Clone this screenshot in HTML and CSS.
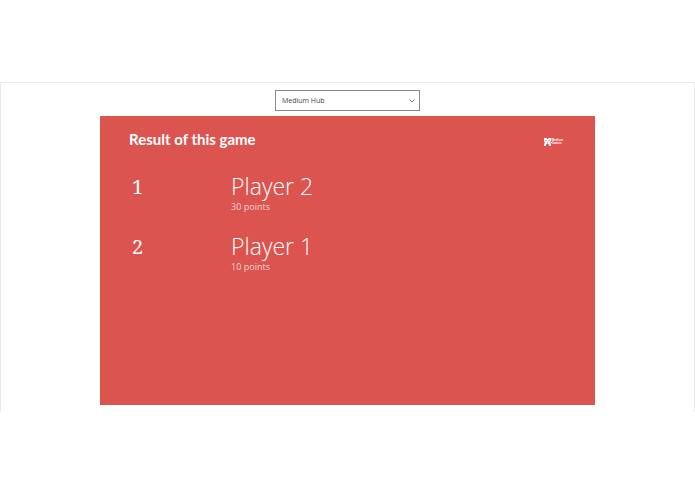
FILE: index.html
```
<!DOCTYPE html>
<html lang="en">
<head>
<meta charset="utf-8">
<title>Result of this game</title>
<link rel="stylesheet" href="styles.css">
</head>
<body>
<main class="simulator">
  <div class="device">
    <select class="device-select" aria-label="Device">
      <option>Medium Hub</option>
    </select>
    <svg class="chevron" viewBox="0 0 6 4" aria-hidden="true"><path d="M.5.5 3 3 5.5.5"/></svg>
  </div>
  <section class="screen">
    <header class="screen-header">
      <h1>Result of this game</h1>
      <div class="logo">
        <svg class="logo-mark" viewBox="0 0 8 8" aria-hidden="true">
          <path d="M0 0h2.500l.5 1h1l.5-1H7v3L6 4.500 7 6v2H5.500L4.500 6h-2L1.500 8H0V6l1-1.500L0 3z"/>
          <path class="logo-cut" d="M1.500 2.500h1M4.500 2.500h1M3 5h1"/>
          <path d="M7 4h1v1H7z"/>
        </svg>
        <div class="logo-text"><span>Medium</span><span>Games</span></div>
      </div>
    </header>
    <ol class="ranking">
      <li>
        <span class="rank">1</span>
        <div><h2>Player 2</h2><p>30 points</p></div>
      </li>
      <li>
        <span class="rank">2</span>
        <div><h2>Player 1</h2><p>10 points</p></div>
      </li>
    </ol>
  </section>
</main>
</body>
</html>
```
FILE: styles.css
```
* {
  box-sizing: border-box;
}

body {
  margin: 0;
  padding: 82px 0;
  background: #fff;
  font-family: "Open Sans", "Noto Sans", sans-serif;
}

.simulator {
  display: flex;
  flex-direction: column;
  align-items: center;
  gap: 5px;
  padding: 7px 0;
  border: 1px solid #ebebeb;
  border-bottom: 0;
}

.device {
  position: relative;
  width: 145px;
  height: 21px;
}

.device-select {
  appearance: none;
  display: block;
  width: 100%;
  height: 100%;
  padding: 0 20px 0 6px;
  border: 1px solid #858a8a;
  border-radius: 0;
  background: #fff;
  color: #424747;
  font: 500 7px "Open Sans", sans-serif;
}

.chevron {
  position: absolute;
  top: 9px;
  right: 5px;
  width: 6px;
  height: 4px;
  fill: none;
  stroke: #777;
}

.screen {
  width: 71.4%;
  aspect-ratio: 495 / 289;
  padding: 12px 32px 0 29px;
  background: #dc544f;
  color: #fff;
}

.screen-header {
  display: flex;
  align-items: center;
  justify-content: space-between;
  height: 22px;
}

h1 {
  margin: 0;
  font: 700 15px/22px Lato, sans-serif;
}

.logo {
  display: flex;
  align-items: center;
  padding-top: 6px;
}

.logo-mark {
  width: 8px;
  height: 8px;
  fill: #fff;
}

.logo-cut {
  stroke: #dc544f;
}

.logo-text {
  display: flex;
  flex-direction: column;
  font: 700 3px/3px "Liberation Sans", sans-serif;
}

.ranking {
  margin: 22px 0 0;
  padding: 0;
  list-style: none;
}

.ranking li {
  display: grid;
  grid-template-columns: 102px 1fr;
  height: 60px;
}

.rank {
  padding-left: 3px;
  font: 20px/29px "Noto Serif", "DejaVu Serif", serif;
}

h2 {
  margin: 0;
  font-size: 23px;
  font-weight: 300;
  line-height: 28px;
}

p {
  margin: 0;
  color: #f8d3d1;
  font-size: 9px;
  line-height: 13px;
}
```
